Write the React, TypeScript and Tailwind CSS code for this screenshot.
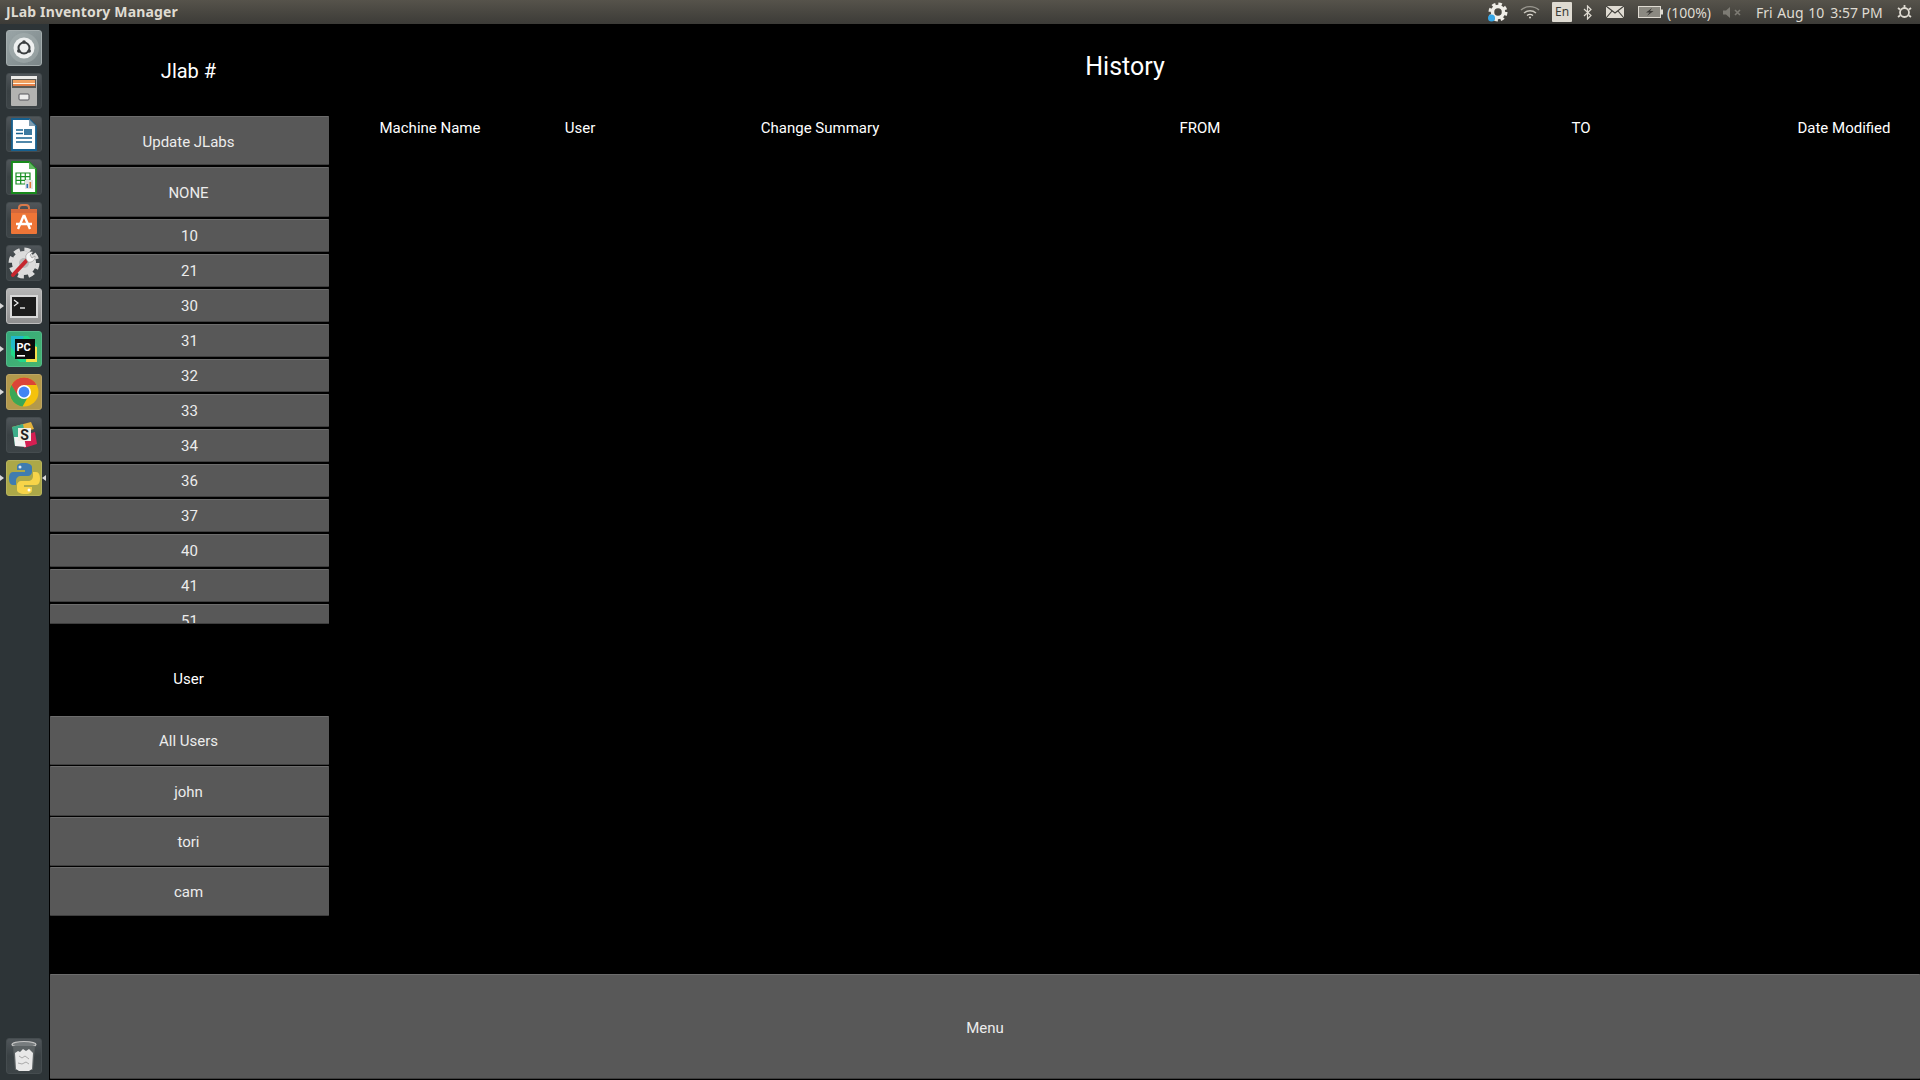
import React from 'react';

const jlabs = ['10', '21', '30', '31', '32', '33', '34', '36', '37', '40', '41', '51'];
const users = ['All Users', 'john', 'tori', 'cam'];
const columns = ['Machine Name', 'User', 'Change Summary', 'FROM', 'TO', 'Date Modified'];

const btn =
  'flex w-full items-center justify-center shrink-0 rounded-[1px] bg-[#585858] border-t border-t-[#6c6c6c] border-b border-b-[#3e3e3e] text-[15px] text-[#ececec]';

const Tile: React.FC<{ className: string; children: React.ReactNode }> = ({ className, children }) => (
  <div className={`relative w-9 h-9 rounded-[3px] shrink-0 flex items-center justify-center ${className}`}>{children}</div>
);

const Pip: React.FC = () => (
  <div className="absolute left-[-7px] top-[14px] w-0 h-0 border-y-[3px] border-y-transparent border-l-[4px] border-l-[#d8d8d8]" />
);

const dark = 'bg-gradient-to-b from-[#50565a] via-[#3a4144] to-[#3d4447] border border-[#454c4f]';

const Launcher: React.FC = () => (
  <div className="w-[49px] shrink-0 bg-[#2d3437] flex flex-col items-start gap-[7px] pt-[6px] pb-[6px] pl-[6px]">
    <Tile className="bg-gradient-to-br from-[#9aa5a7] to-[#7b8688] border border-[#a4adae]">
      <svg width="30" height="30" viewBox="0 0 30 30">
        <circle cx="15" cy="15" r="15" fill="#aab3b4" opacity=".5" />
        <circle cx="15" cy="15" r="10.5" fill="#eef0f0" />
        <circle cx="15" cy="15" r="5.5" fill="none" stroke="#3b3f41" strokeWidth="2" />
        <circle cx="15" cy="9" r="1.8" fill="#3b3f41" />
        <circle cx="9.8" cy="18" r="1.8" fill="#3b3f41" />
        <circle cx="20.2" cy="18" r="1.8" fill="#3b3f41" />
      </svg>
    </Tile>
    <Tile className={dark}>
      <svg width="28" height="32" viewBox="0 0 28 32">
        <rect x="1" y="1" width="26" height="30" rx="1" fill="#b3b3b1" />
        <rect x="1" y="1" width="26" height="3" fill="#ecebe8" />
        <rect x="2" y="4" width="24" height="9" fill="#5b5954" />
        <rect x="3" y="5" width="22" height="3" fill="#f0a05f" />
        <rect x="3" y="8" width="22" height="1" fill="#fff3e2" />
        <rect x="3" y="9" width="22" height="2" fill="#e5824a" />
        <rect x="9" y="19" width="10" height="6" rx="1" fill="#ededed" stroke="#55555a" />
      </svg>
    </Tile>
    <Tile className={dark}>
      <svg width="26" height="33" viewBox="0 0 26 33">
        <path d="M1 1H18L25 8V32H1Z" fill="#fff" stroke="#16608f" strokeWidth="1.8" />
        <path d="M18 1L25 8H18Z" fill="#7f9cb0" />
        <path d="M5 12h7M5 15.5h7M5 20h16M5 24h16" stroke="#17618f" strokeWidth="1.6" />
        <rect x="13" y="11" width="8" height="6" fill="#3d7aa0" />
      </svg>
    </Tile>
    <Tile className={dark}>
      <svg width="26" height="33" viewBox="0 0 26 33">
        <path d="M1 1H18L25 8V32H1Z" fill="#fff" stroke="#188a1c" strokeWidth="1.8" />
        <path d="M18 1L25 8H18Z" fill="#63b863" />
        <path d="M5 12h14v11H5ZM5 15.6h14M5 19.3h14M9.7 12v11M14.3 12v11" fill="none" stroke="#1a8f24" strokeWidth="1.2" />
        <rect x="14" y="19" width="8" height="9" fill="#e4e4e4" />
        <rect x="15.5" y="23" width="1.6" height="4" fill="#2f6fb0" />
        <rect x="18.5" y="21" width="1.6" height="6" fill="#e07b39" />
      </svg>
    </Tile>
    <Tile className={dark}>
      <svg width="30" height="32" viewBox="0 0 30 32">
        <path d="M10 6V4a3 3 0 0 1 3-3h4a3 3 0 0 1 3 3v2" fill="none" stroke="#d9794a" strokeWidth="2" />
        <path d="M2 5H28V29a1 1 0 0 1-1 1H3a1 1 0 0 1-1-1Z" fill="#ee7537" />
        <path d="M2 5H28V9H2Z" fill="#d4683a" />
        <path d="M15 11L9 25M15 11L21 25M7 20H23" stroke="#fff" strokeWidth="2.4" fill="none" />
      </svg>
    </Tile>
    <Tile className={dark}>
      <svg width="32" height="32" viewBox="0 0 32 32">
        <circle cx="16" cy="16" r="12" fill="#dcdcdc" />
        <circle cx="16" cy="16" r="13.5" fill="none" stroke="#dcdcdc" strokeWidth="4" strokeDasharray="6 4.6" />
        <circle cx="16" cy="16" r="5" fill="#b9b9b9" />
        <path d="M5 28L20 12" stroke="#c6262e" strokeWidth="4" strokeLinecap="round" />
        <path d="M18 12a5.5 5.5 0 0 1 7-7l-3 3 2 3 3-2a5.5 5.5 0 0 1-7 6Z" fill="#f5f5f5" stroke="#8a8a8a" strokeWidth=".6" />
      </svg>
    </Tile>
    <Tile className="bg-gradient-to-b from-[#b5b5b5] to-[#8f8f8f] border border-[#bdbdbd]">
      <Pip />
      <svg width="30" height="28" viewBox="0 0 30 28">
        <rect x="1" y="3" width="28" height="23" fill="#d8d8d8" />
        <rect x="3" y="5" width="24" height="19" fill="#1c1c1c" />
        <path d="M5 8l4 3-4 3" fill="none" stroke="#eee" strokeWidth="1.2" />
        <path d="M11 16h5" stroke="#eee" strokeWidth="1.4" />
      </svg>
    </Tile>
    <Tile className="bg-gradient-to-br from-[#34a87c] to-[#46b56f] border border-[#55b98a]">
      <Pip />
      <svg width="32" height="32" viewBox="0 0 32 32">
        <path d="M3 3H20L29 12V29H12L3 22Z" fill="#21d789" />
        <path d="M3 3H16L8 20L3 14Z" fill="#21b9c9" />
        <path d="M19 10L29 14V29H18Z" fill="#f5e04a" />
        <rect x="7" y="6" width="20" height="20" fill="#0b0b0b" />
        <text x="8.5" y="18" fontSize="11" fontWeight="700" fill="#fff" fontFamily="Roboto, sans-serif">PC</text>
        <rect x="9" y="22" width="8" height="1.6" fill="#fff" />
      </svg>
    </Tile>
    <Tile className="bg-[#b3994c] border border-[#bda564]">
      <Pip />
      <svg width="30" height="30" viewBox="0 0 30 30">
        <circle cx="15" cy="15" r="14.5" fill="#f4c20d" />
        <path d="M15 .5A14.5 14.5 0 0 0 2.4 8.2l6.4 11 2-1.5A7 7 0 0 1 15 8h12.6A14.5 14.5 0 0 0 15 .5Z" fill="#db4437" />
        <path d="M2.4 8A14.5 14.5 0 0 0 13.5 29.4l6-10.4a7 7 0 0 1-10.5-.5Z" fill="#3aa757" />
        <circle cx="15" cy="15" r="7" fill="#fff" />
        <circle cx="15" cy="15" r="5.4" fill="#4285f4" />
      </svg>
    </Tile>
    <Tile className={dark}>
      <svg width="28" height="28" viewBox="0 0 28 28">
        <path d="M2 6L21 1L24 8L5 13Z" fill="#e3b23c" />
        <path d="M2 6L13 3L15 14L5 25Z" fill="#3dae8a" />
        <path d="M15 14L25 11L27 23L14 27Z" fill="#d51f52" />
        <path d="M5 25L4 16H14L16 26Z" fill="#f4f4f4" />
        <rect x="8" y="7" width="13" height="13" fill="#f2efe6" />
        <text x="14.5" y="18.5" fontSize="14" fontWeight="700" fill="#222" textAnchor="middle" fontFamily="Roboto, sans-serif">S</text>
      </svg>
    </Tile>
    <Tile className="bg-[#aca848] border border-[#b8b45e]">
      <Pip />
      <div className="absolute right-[-5px] top-[14px] w-0 h-0 border-y-[3px] border-y-transparent border-r-[4px] border-r-[#d8d8d8]" />
      <svg width="33" height="33" viewBox="0 0 33 33">
        <path d="M16 1c-6 0-7 2-7 4v3h8v2H5c-3 0-4 3-4 6.5S2 23 5 23h3v-4c0-3 2-5 5-5h7c2 0 4-2 4-4V5c0-2-3-4-8-4Z" fill="#3f7cb0" />
        <circle cx="12" cy="5" r="1.5" fill="#dbe8f2" />
        <path d="M17 32c6 0 7-2 7-4v-3h-8v-2h12c3 0 4-3 4-6.5S31 10 28 10h-3v4c0 3-2 5-5 5h-7c-2 0-4 2-4 4v5c0 2 3 4 8 4Z" fill="#f7d449" />
        <circle cx="21" cy="28" r="1.5" fill="#fff" />
      </svg>
    </Tile>
    <Tile className={`mt-auto ${dark}`}>
      <svg width="26" height="32" viewBox="0 0 26 32">
        <ellipse cx="13" cy="4.5" rx="12" ry="3" fill="#777c7e" stroke="#c4c4c4" strokeWidth="1.2" />
        <path d="M2 6L4 30H22L24 6" fill="#5c6264" />
        <path d="M4 13l3-2 2 1 3-3 3 2 3-2 4 4-1 16-3 2H8l-3-2Z" fill="#e8e8e8" />
        <path d="M8 16l3 2 3-2 4 3M7 23l4 1 4-2 3 2" fill="none" stroke="#a9a9a9" />
      </svg>
    </Tile>
  </div>
);

const TopBar: React.FC = () => (
  <div className="h-6 shrink-0 flex items-center bg-gradient-to-b from-[#56534b] to-[#3c3b37] font-['Noto_Sans',sans-serif] text-[#dfdbd2]">
    <span className="ml-[6px] mb-px text-[14px] font-bold tracking-[0.15px]">JLab Inventory Manager</span>
    <div className="ml-auto flex items-center text-[14px] text-[#dfdbd2]">
      <svg width="21" height="20" viewBox="0 0 21 20" className="mr-[12px]">
        <circle cx="11" cy="10" r="5.5" fill="none" stroke="#f0eee8" strokeWidth="3.5" />
        <circle cx="11" cy="10" r="8" fill="none" stroke="#f0eee8" strokeWidth="3" strokeDasharray="3.5 2.8" />
        <circle cx="4.5" cy="16" r="3.5" fill="#35a7e8" />
      </svg>
      <svg width="20" height="14" viewBox="0 0 20 14" fill="none" stroke="#9a9890" strokeWidth="1.4" className="mr-[12px]">
        <path d="M1 5c5-4.5 13-4.5 18 0" />
        <path d="M4 8c3.5-3 8.500-3 12 0" stroke="#c9c6bd" />
        <path d="M7 10.5c2-1.5 4-1.5 6 0" stroke="#dfdbd2" />
        <circle cx="10" cy="12.5" r="1" fill="#dfdbd2" stroke="none" />
      </svg>
      <span className="w-5 h-5 mr-[11px] rounded-[1px] bg-[#dfdbd2] text-[#3c3b37] text-[12px] flex items-center justify-center">En</span>
      <svg width="9" height="15" viewBox="0 0 9 15" fill="none" stroke="#dfdbd2" strokeWidth="1.2" className="mr-[14px]">
        <path d="M1 4l7 6.5-3.5 3.5V1L8 4.5 1 11" />
      </svg>
      <svg width="18" height="12" viewBox="0 0 18 12" className="mr-[14px]">
        <rect width="18" height="12" fill="#dfdbd2" />
        <path d="M0 0l9 7 9-7M0 12l6-7M18 12l-6-7" fill="none" stroke="#3f3e39" strokeWidth="1.1" />
      </svg>
      <svg width="25" height="12" viewBox="0 0 25 12" className="mr-[4px]">
        <rect x=".5" y=".5" width="22" height="11" fill="#8b8981" stroke="#dfdbd2" />
        <rect x="23" y="3.5" width="2" height="5" fill="#dfdbd2" />
        <path d="M14 2L8 6.5h3.500L9 10l6.500-5H12Z" fill="#3c3b37" />
      </svg>
      <span className="mr-[11px] w-[45px] text-[14px]">(100%)</span>
      <svg width="19" height="11" viewBox="0 0 19 11" className="mr-[14px]">
        <path d="M0 3.5h3L7 0v11L3 7.5H0Z" fill="#7d7b74" />
        <path d="M12 3l5 5M17 3l-5 5" stroke="#7d7b74" strokeWidth="1.6" />
      </svg>
      <span className="w-[126px] whitespace-nowrap mr-[15px] flex gap-[6px]">
        <span className="[word-spacing:1px]">Fri Aug 10</span>
        <span>3:57 PM</span>
      </span>
      <svg width="15" height="16" viewBox="0 0 15 16" fill="none" stroke="#dfdbd2" strokeWidth="1.8" className="mr-2">
        <circle cx="7.5" cy="8.5" r="4.5" />
        <path d="M7.500 1v4M1 4l2 1.500M14 4l-2 1.500M1 13l2-1.500M14 13l-2-1.500" />
      </svg>
    </div>
  </div>
);

export default function App() {
  return (
    <div className="w-[1920px] h-[1080px] overflow-hidden flex flex-col bg-black font-['Roboto',sans-serif] text-white">
      <TopBar />
      <div className="flex flex-1 min-h-0">
        <Launcher />
        <div className="flex-1 min-w-0 flex flex-col pl-px">
          <div className="flex flex-1 min-h-0">
            <div className="w-[279px] shrink-0 flex flex-col">
              <div className="h-[92px] shrink-0 pt-[2px] pr-[2px] flex items-center justify-center text-[20px]">Jlab #</div>
              <div className="h-[508px] shrink-0 flex flex-col gap-[2px] overflow-hidden border-b border-b-[#3e3e3e]">
                <div className={`${btn} h-[49px] pt-[4px] pr-[2px]`}>Update JLabs</div>
                <div className={`${btn} h-[50px] pt-[2px] pr-[2px]`}>NONE</div>
                <div className="flex flex-col gap-[2px]">
                  {jlabs.map(n => (
                    <div key={n} className={`${btn} h-[33px] pt-px`}>{n}</div>
                  ))}
                </div>
              </div>
              <div className="h-[92px] shrink-0 pt-[19px] pr-[2px] flex items-center justify-center text-[15px]">User</div>
              <div className="flex flex-col gap-px">
                {users.map(u => (
                  <div key={u} className={`${btn} h-[49.25px] pt-[2px] pr-[2px]`}>{u}</div>
                ))}
              </div>
            </div>
            <div className="flex-1 min-w-0 flex flex-col pl-px">
              <div className="h-[69px] shrink-0 pt-[16px] flex items-center justify-center text-[25px]">History</div>
              <div className="grid grid-cols-[194px_106px_374px_386px_376px_150px] ml-[3px] pt-[24px] text-[15px] text-center">
                {columns.map(c => (
                  <div key={c}>{c}</div>
                ))}
              </div>
            </div>
          </div>
          <div className={`${btn} h-[105px] mb-[1px] pt-[3px]`}>Menu</div>
        </div>
      </div>
    </div>
  );
}
